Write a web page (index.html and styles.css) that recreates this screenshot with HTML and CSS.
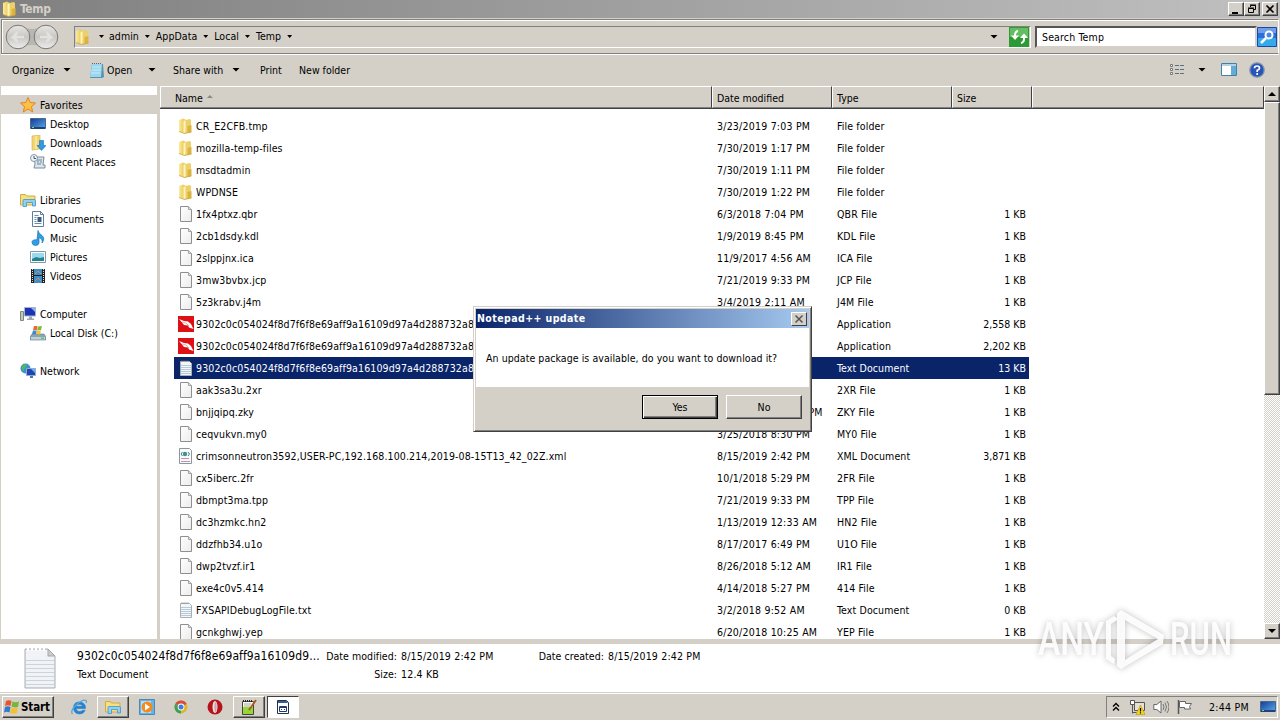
FILE: index.html
```html
<!DOCTYPE html>
<html>
<head>
<meta charset="utf-8">
<title>Temp</title>
<link rel="stylesheet" href="styles.css">
</head>
<body>
<!-- shared icons -->
<svg class="defs">
  <defs>
    <linearGradient id="gPage" x1="0" y1="0" x2="1" y2="1"><stop offset="0" stop-color="#fff"/><stop offset="1" stop-color="#ececec"/></linearGradient>
    <linearGradient id="gFold" x1="0" y1="0" x2="1" y2="0"><stop offset="0" stop-color="#fbeb9d"/><stop offset="1" stop-color="#e4bd3c"/></linearGradient>
    <linearGradient id="gBlue" x1="0" y1="0" x2="1" y2="1"><stop offset="0" stop-color="#153a92"/><stop offset="1" stop-color="#57a9ee"/></linearGradient>
    <linearGradient id="gNav" x1="0" y1="0" x2="0" y2="1"><stop offset="0" stop-color="#e9e7e4"/><stop offset=".5" stop-color="#c9c7c4"/><stop offset="1" stop-color="#eeedeb"/></linearGradient>
  </defs>
  <symbol id="folder" viewBox="0 0 16 16">
    <path d="M1 2l4-1.500 3 1.500v12l-1.500 1.500L1 13.500z" fill="url(#gFold)"/>
    <path d="M6 2.500l5.500-1.500 1.500 1v12L6 15.500z" fill="#ecd06a"/>
    <path d="M5.500 3l2-.8v12l-2 1z" fill="#fff4bd"/>
    <path d="M9.500 8l4-1v7l-4 1z" fill="#dcb340"/>
    <path d="M1 13.500l5.500 2 7-1.500" fill="none" stroke="#c79d31" stroke-width=".7"/>
  </symbol>
  <symbol id="page" viewBox="0 0 16 16">
    <path d="M2.500.5h8l3 3v12h-11z" fill="url(#gPage)" stroke="#8f8f8f"/>
    <path d="M10.500.5v3h3" fill="#ddd" stroke="#a5a5a5"/>
  </symbol>
  <symbol id="text" viewBox="0 0 16 16">
    <path d="M2.500 1.500h9l2 2v12h-11z" fill="#f4f6f8" stroke="#a8b0b6"/>
    <path d="M3.500 1h8" stroke="#777" stroke-dasharray="1 1"/>
    <path d="M3 5.500h10M3 7.500h10M3 9.500h10M3 11.500h10M3 13.500h10" stroke="#b3cadc"/>
  </symbol>
  <symbol id="xml" viewBox="0 0 16 16">
    <path d="M1.500.5h10l2 2v13h-12z" fill="#fafafa" stroke="#8d959d"/>
    <circle cx="7" cy="6" r="2.200" fill="#35997f"/><path d="M4.500 4L3 6l1.500 2M10 4l1.500 2L10 8" fill="none" stroke="#4b6ea8"/>
    <path d="M3 10.500h8M3 13.500h9" stroke="#c491b5"/>
  </symbol>
  <symbol id="app" viewBox="0 0 16 16">
    <path d="M0 0h16v16H0z" fill="#dc1015"/>
    <path d="M1 3l5 2 4 .5 3 2.500 2.500 5-4.500-1.500-1-2-4-.5-2-2.500z" fill="#fff"/><path d="M4 6l4 1 3 3" fill="none" stroke="#eaa"/>
  </symbol>
  <symbol id="monitor" viewBox="0 0 16 16">
    <path d="M.5 2.500h15v10H.5z" fill="url(#gBlue)" stroke="#49688f"/>
    <path d="M1 11h14v2H1z" fill="#1e4374"/><path d="M2 11.500h2" stroke="#7dd07d"/>
  </symbol>
  <symbol id="library" viewBox="0 0 16 16">
    <path d="M.5 2.500h5l1 1.500h8.500v9H.5z" fill="#f6df7e" stroke="#d2ab43"/>
    <path d="M3 13.500V8.500q0-1 1-1h10q1.500 0 1.500 1v5.500h-3v-3.500h-6v4H3z" fill="#8fd0f4" stroke="#3f95c8" stroke-width=".8"/>
  </symbol>
  <symbol id="down" viewBox="0 0 16 16">
    <path d="M2 1l8-1v14l-8 1z" fill="#f0d774" stroke="#d2ae43" stroke-width=".6"/><path d="M6 1v13" stroke="#fff5bf"/>
    <path d="M9.500 5.500h4v5H16l-4.500 5-4.500-5h2.500z" fill="#3198e2" stroke="#1b6fb5" stroke-width=".6"/>
  </symbol>
</svg>

<!-- title bar -->
<div class="titlebar">
  <svg class="i16"><use href="#folder"/></svg>
  <span class="title">Temp</span>
  <div class="wbtns">
    <span class="wbtn"><svg viewBox="0 0 10 10"><path d="M1 8h6v2H1z"/></svg></span>
    <span class="wbtn"><svg viewBox="0 0 10 10"><path d="M3.500 3V1.500h5v4H7M3 1h6" fill="none" stroke="#000"/><path d="M1.500 4.500h5v4h-5zM1 4h6" fill="none" stroke="#000"/></svg></span>
    <span class="wbtn last"><svg viewBox="0 0 10 10"><path d="M1.500 1.500l7 7M8.500 1.500l-7 7" stroke="#000" stroke-width="1.600"/></svg></span>
  </div>
</div>

<!-- address row -->
<div class="nav">
  <svg class="arrows" viewBox="0 0 56 28">
    <path d="M12 3q16 6 33 0v22q-17-6-33 0z" fill="#b9b6b1"/>
    <circle cx="14" cy="14" r="11.800" fill="url(#gNav)" stroke="#777"/><circle cx="42" cy="14" r="11.800" fill="url(#gNav)" stroke="#777"/>
    <path d="M20 14H9l4.500-4.500M9 14l4.500 4.500M36 14h11l-4.500-4.500M47 14l-4.500 4.500" fill="none" stroke="#e4e2df" stroke-width="2.500"/>
  </svg>
  <div class="address">
    <svg class="i16"><use href="#folder"/></svg>
    <i class="tri first"></i><span>admin</span><i class="tri"></i><span>AppData</span><i class="tri"></i><span>Local</span><i class="tri"></i><span>Temp</span><i class="tri"></i>
    <i class="tri big end"></i>
    <svg class="go" viewBox="0 0 20 20"><path d="M0 0h20v20H0z" fill="#2d9b35"/><path d="M1 1h18v9H1z" fill="#63bd62"/><path d="M9 4Q5.500 4.500 6 10M12 16q3.500-.5 3-6" fill="none" stroke="#fff" stroke-width="2"/><path d="M2 8.500h8L6 13zM11 11h8l-4-4.500z" fill="#fff"/></svg>
  </div>
  <div class="search">Search Temp</div>
  <svg class="find" viewBox="0 0 20 20"><path d="M.5.5h19v19H.5z" fill="#2c6ddd" stroke="#194ba4"/><path d="M1 11h18v8H1z" fill="#35a9ee"/><path d="M1 1h18v5H1z" fill="#6f9de9"/><circle cx="12" cy="8" r="3.500" fill="#4d86e0" stroke="#fff" stroke-width="2"/><path d="M9 11l-5 5" stroke="#fff" stroke-width="2.500"/></svg>
</div>

<!-- command bar -->
<div class="commands">
  <span class="c1">Organize</span><i class="tri big"></i>
  <svg class="i16 np" viewBox="0 0 16 16"><path d="M3 2h11l1 13-2 1H1z" fill="#5b93ae"/><path d="M3 2h10l-1 13H1z" fill="#9ad7ef"/><path d="M3 1.500h10" stroke="#567" stroke-dasharray="1 1"/><path d="M3 5h9M3 8h9M2 11h9" stroke="#c8edf9"/></svg>
  <span class="c2">Open</span><i class="tri big"></i>
  <span class="c3">Share with</span><i class="tri big"></i>
  <span class="c4">Print</span>
  <span class="c5">New folder</span>
  <div class="views">
    <svg class="i16" viewBox="0 0 16 16"><path d="M1.500 2.500h2v2h-2zM1.500 6.500h2v2h-2zM1.500 10.500h2v2h-2z" fill="#fff" stroke="#777"/><path d="M6 3.500h4M11 3.500h4M6 7.500h4M11 7.500h4M6 11.500h4M11 11.500h4" stroke="#5d7183"/></svg>
    <i class="tri big"></i>
    <svg class="i16 pane" viewBox="0 0 16 16"><path d="M.5 1.500h15v12H.5z" fill="#fff" stroke="#3d82ad"/><path d="M1 2h14v2H1z" fill="#b4d3e5"/><path d="M10 4h5v9h-5z" fill="#62acd5"/></svg>
    <svg class="i16" viewBox="0 0 16 16"><circle cx="8" cy="8" r="7.200" fill="#2855b8" stroke="#8493ac" stroke-width="1.300"/><path d="M5.500 6.200Q5.500 4 8 4t2.500 2.200Q10.500 7.500 8.200 8.300V10M8.200 11v2" fill="none" stroke="#fff" stroke-width="1.700"/></svg>
  </div>
</div>

<div class="main">
  <!-- navigation pane -->
  <div class="side">
    <div class="s top on"><svg class="i16" viewBox="0 0 16 16"><path d="M8 .5l2.200 5 5.300.5-4 3.500 1.200 5.500L8 12l-4.700 3 1.200-5.500-4-3.500 5.300-.5z" fill="#fcc043" stroke="#e28320"/></svg>Favorites</div>
    <div class="s"><svg class="i16"><use href="#monitor"/></svg>Desktop</div>
    <div class="s"><svg class="i16"><use href="#down"/></svg>Downloads</div>
    <div class="s"><svg class="i16" viewBox="0 0 16 16"><path d="M4 3h10l-1 8h2v3H4l1-4z" fill="#dae5ee" stroke="#7b8d9b"/><path d="M7 6h5M7 8h2M10 8h2M7 10h4" stroke="#6e8497"/><circle cx="4" cy="4" r="3.500" fill="#eef3f7" stroke="#8796a3"/><path d="M4 2v2.500h2" fill="none" stroke="#456"/></svg>Recent Places</div>
    <div class="s top gap"><svg class="i16"><use href="#library"/></svg>Libraries</div>
    <div class="s"><svg class="i16" viewBox="0 0 16 16"><path d="M2.500.5h8l3 3v12h-11z" fill="#fff" stroke="#5e7f9b"/><path d="M10.500.5v3h3" fill="none" stroke="#5e7f9b"/><path d="M4.500 4.500h4M4.500 6.500h2M4.500 8.500h2M4.500 10.500h2M4.500 12.500h7" stroke="#668bac"/><path d="M7.500 6h4v5h-4z" fill="#375b82"/></svg>Documents</div>
    <div class="s"><svg class="i16" viewBox="0 0 16 16"><path d="M8 .5q.5 3 4 5 3.500 3 0 7.500 1-4-3-5.500v5.500q-.5 2.500-3.500 2.500T2 12.500t5-2.700z" fill="#2f9fe3" stroke="#1b73b7" stroke-width=".7"/></svg>Music</div>
    <div class="s"><svg class="i16" viewBox="0 0 16 16"><path d="M.5 2.500h15v11H.5z" fill="#fff" stroke="#8199a5"/><path d="M2 4h12v8H2z" fill="#9ad9ee"/><path d="M2 10l4-2 4 1 4-1v4H2z" fill="#248292"/></svg>Pictures</div>
    <div class="s"><svg class="i16" viewBox="0 0 16 16"><path d="M1 1h14v14H1z" fill="#222"/><path d="M4 1h8v6H4zM4 8h8v7H4z" fill="#3c8fca"/><path d="M2.500 1v14M13.500 1v14" stroke="#ddd" stroke-dasharray="1 1"/><path d="M5 6l3-3 3 3M5 13l3-3 3 3" stroke="#d08c5a" fill="none"/></svg>Videos</div>
    <div class="s top gap"><svg class="i16" viewBox="0 0 16 16"><path d="M.5 5.500h3v9h-3z" fill="#bfc9bd" stroke="#7a8a7a"/><path d="M4.500 1.500h11v8.500h-11z" fill="#1b34b5" stroke="#aab4c5"/><path d="M11 2h4v4z" fill="#88b0f0"/><path d="M9 10.500h3v2h2V14H7v-1.500h2z" fill="#9ba7b5"/></svg>Computer</div>
    <div class="s"><svg class="i16" viewBox="0 0 16 16"><path d="M2 9h12l2 3v3H0v-3z" fill="#8aa5b2" stroke="#5f7986" stroke-width=".6"/><path d="M1 12h14v2.500H1z" fill="#bed0d8"/><path d="M11 13.200h3" stroke="#42b542"/><path d="M4 1l3.500 0-.7 4H3z" fill="#ec6a2f"/><path d="M8 1.500l4-.5-1 4-4 .5z" fill="#80b938"/><path d="M3 5.500h3.800L6 9H2z" fill="#3b87d4"/><path d="M7 6l4-.5-1 4-4-.5z" fill="#f8c230"/></svg>Local Disk (C:)</div>
    <div class="s top gap"><svg class="i16" viewBox="0 0 16 16"><circle cx="5.500" cy="5.500" r="5" fill="#3a92cf"/><path d="M2 3q3-3 5-1l-2 3-3 4zM6 7l3-2v4z" fill="#56b85b"/><path d="M6.500 5.500h9v7h-9z" fill="#1c45b9" stroke="#9aaac2"/><path d="M11 6h4v4z" fill="#6eadf0"/><path d="M10 13h3v2h-3z" fill="#4e74b4"/></svg>Network</div>
  </div>

  <!-- file list -->
  <div class="list">
    <div class="head"><span class="h name">Name <i class="sort"></i></span><span class="h date">Date modified</span><span class="h type">Type</span><span class="h size">Size</span><span class="h rest"></span></div>
    <div class="rows">
      <div class="row"><svg class="i16"><use href="#folder"/></svg><span class="n">CR_E2CFB.tmp</span><span class="d">3/23/2019 7:03 PM</span><span class="t">File folder</span><span class="z"></span></div>
      <div class="row"><svg class="i16"><use href="#folder"/></svg><span class="n">mozilla-temp-files</span><span class="d">7/30/2019 1:17 PM</span><span class="t">File folder</span><span class="z"></span></div>
      <div class="row"><svg class="i16"><use href="#folder"/></svg><span class="n">msdtadmin</span><span class="d">7/30/2019 1:11 PM</span><span class="t">File folder</span><span class="z"></span></div>
      <div class="row"><svg class="i16"><use href="#folder"/></svg><span class="n">WPDNSE</span><span class="d">7/30/2019 1:22 PM</span><span class="t">File folder</span><span class="z"></span></div>
      <div class="row"><svg class="i16"><use href="#page"/></svg><span class="n">1fx4ptxz.qbr</span><span class="d">6/3/2018 7:04 PM</span><span class="t">QBR File</span><span class="z">1 KB</span></div>
      <div class="row"><svg class="i16"><use href="#page"/></svg><span class="n">2cb1dsdy.kdl</span><span class="d">1/9/2019 8:45 PM</span><span class="t">KDL File</span><span class="z">1 KB</span></div>
      <div class="row"><svg class="i16"><use href="#page"/></svg><span class="n">2slppjnx.ica</span><span class="d">11/9/2017 4:56 AM</span><span class="t">ICA File</span><span class="z">1 KB</span></div>
      <div class="row"><svg class="i16"><use href="#page"/></svg><span class="n">3mw3bvbx.jcp</span><span class="d">7/21/2019 9:33 PM</span><span class="t">JCP File</span><span class="z">1 KB</span></div>
      <div class="row"><svg class="i16"><use href="#page"/></svg><span class="n">5z3krabv.j4m</span><span class="d">3/4/2019 2:11 AM</span><span class="t">J4M File</span><span class="z">1 KB</span></div>
      <div class="row"><svg class="i16"><use href="#app"/></svg><span class="n">9302c0c054024f8d7f6f8e69aff9a16109d97a4d288732a8</span><span class="d"></span><span class="t">Application</span><span class="z">2,558 KB</span></div>
      <div class="row"><svg class="i16"><use href="#app"/></svg><span class="n">9302c0c054024f8d7f6f8e69aff9a16109d97a4d288732a8</span><span class="d"></span><span class="t">Application</span><span class="z">2,202 KB</span></div>
      <div class="row sel"><svg class="i16"><use href="#text"/></svg><span class="n">9302c0c054024f8d7f6f8e69aff9a16109d97a4d288732a8</span><span class="d"></span><span class="t">Text Document</span><span class="z">13 KB</span></div>
      <div class="row"><svg class="i16"><use href="#page"/></svg><span class="n">aak3sa3u.2xr</span><span class="d"></span><span class="t">2XR File</span><span class="z">1 KB</span></div>
      <div class="row"><svg class="i16"><use href="#page"/></svg><span class="n">bnjjqipq.zky</span><span class="d">10/11/2018 12:30 PM</span><span class="t">ZKY File</span><span class="z">1 KB</span></div>
      <div class="row"><svg class="i16"><use href="#page"/></svg><span class="n">ceqvukvn.my0</span><span class="d">3/25/2018 8:30 PM</span><span class="t">MY0 File</span><span class="z">1 KB</span></div>
      <div class="row"><svg class="i16"><use href="#xml"/></svg><span class="n">crimsonneutron3592,USER-PC,192.168.100.214,2019-08-15T13_42_02Z.xml</span><span class="d">8/15/2019 2:42 PM</span><span class="t">XML Document</span><span class="z">3,871 KB</span></div>
      <div class="row"><svg class="i16"><use href="#page"/></svg><span class="n">cx5iberc.2fr</span><span class="d">10/1/2018 5:29 PM</span><span class="t">2FR File</span><span class="z">1 KB</span></div>
      <div class="row"><svg class="i16"><use href="#page"/></svg><span class="n">dbmpt3ma.tpp</span><span class="d">7/21/2019 9:33 PM</span><span class="t">TPP File</span><span class="z">1 KB</span></div>
      <div class="row"><svg class="i16"><use href="#page"/></svg><span class="n">dc3hzmkc.hn2</span><span class="d">1/13/2019 12:33 AM</span><span class="t">HN2 File</span><span class="z">1 KB</span></div>
      <div class="row"><svg class="i16"><use href="#page"/></svg><span class="n">ddzfhb34.u1o</span><span class="d">8/17/2017 6:49 PM</span><span class="t">U1O File</span><span class="z">1 KB</span></div>
      <div class="row"><svg class="i16"><use href="#page"/></svg><span class="n">dwp2tvzf.ir1</span><span class="d">8/26/2018 5:12 AM</span><span class="t">IR1 File</span><span class="z">1 KB</span></div>
      <div class="row"><svg class="i16"><use href="#page"/></svg><span class="n">exe4c0v5.414</span><span class="d">4/14/2018 5:27 PM</span><span class="t">414 File</span><span class="z">1 KB</span></div>
      <div class="row"><svg class="i16"><use href="#text"/></svg><span class="n">FXSAPIDebugLogFile.txt</span><span class="d">3/2/2018 9:52 AM</span><span class="t">Text Document</span><span class="z">0 KB</span></div>
      <div class="row"><svg class="i16"><use href="#page"/></svg><span class="n">gcnkghwj.yep</span><span class="d">6/20/2018 10:25 AM</span><span class="t">YEP File</span><span class="z">1 KB</span></div>
    </div>
  </div>
  <div class="scroll">
    <span class="sb"><i class="tri big up"></i></span>
    <span class="thumb"></span>
    <span class="track"></span>
    <span class="sb"><i class="tri big"></i></span>
  </div>
</div>

<!-- details pane -->
<div class="details">
  <svg class="bigdoc" viewBox="0 0 32 42">
    <path d="M1 2h23l7 7v32H1z" fill="#e6eaee" stroke="#a9b0b5"/>
    <path d="M2 3h21v7h7v30H2z" fill="#f1f3f6"/>
    <path d="M2 13.500h28M2 17.500h28M2 21.500h28M2 25.500h28M2 29.500h28M2 33.500h28M2 37.500h28" stroke="#c9d4df"/>
    <path d="M24 2v7h7z" fill="#ccc" stroke="#999" stroke-width=".7"/><path d="M3 2h19" stroke="#fff" stroke-width="4" stroke-dasharray="2 2"/>
  </svg>
  <div class="dcol d1"><span class="dname">9302c0c054024f8d7f6f8e69aff9a16109d9...</span><span>Text Document</span></div>
  <div class="dcol d2"><span>Date modified:</span><span>Size:</span></div>
  <div class="dcol d3"><span>8/15/2019 2:42 PM</span><span>12.4 KB</span></div>
  <div class="dcol d4"><span>Date created:</span></div>
  <div class="dcol d5"><span>8/15/2019 2:42 PM</span></div>
</div>

<!-- taskbar -->
<div class="taskbar">
  <div class="start"><svg class="i16" viewBox="0 0 16 16"><path d="M2 2q3-1.500 5.500 0L6.500 7Q4 5.500 1 7z" fill="#e8552a"/><path d="M8.500 2.500q3 1.500 6.500 0L14 8q-3 1-6.500-.5z" fill="#76b73a"/><path d="M1 8q3-1.500 5.500 0l-1 5.500q-2.500-1.500-5.500 0z" fill="#3379cc"/><path d="M7.300 8.500q3 1.500 6.500.5l-1 5q-3 1.500-6.500 0z" fill="#f5bf2d"/></svg><b>Start</b></div>
  <div class="tb"><svg class="i16" viewBox="0 0 16 16"><path d="M14.500 9.500H5q.5 3 3.500 3 2 0 3-1.200h2.700q-1.500 3.700-5.700 3.700-6-.3-6-6.300Q2.500 3 8.500 3q6.300.5 6 6.500zM5 7.200h6.500Q11 5.200 8.300 5.200T5 7.200z" fill="#2482cf" stroke="#2482cf" stroke-width=".6"/><path d="M1.500 15Q-1 12 5 6q7-6 10-4.500 1 .5 0 2.500" fill="none" stroke="#52a9dc" stroke-width="1.300"/></svg></div>
  <div class="tb up"><svg class="i16"><use href="#library"/></svg></div>
  <div class="tb"><svg class="i16" viewBox="0 0 16 16"><path d="M.5.5h15v15H.5z" fill="#65b4e5" stroke="#4b87b8"/><path d="M2 2h10v12H2z" fill="#b7def5"/><circle cx="8" cy="8" r="5.500" fill="#f48a1c"/><path d="M6 4.500l5 3.500-5 3.500z" fill="#fff"/></svg></div>
  <div class="tb"><svg class="i16" viewBox="0 0 16 16"><circle cx="8" cy="8" r="6.500" fill="#ddb62c"/><path d="M8 8L2.400 4.700a6.500 6.500 0 0 1 11.300.1z" fill="#db4b3c"/><path d="M8 8v6.500A6.500 6.500 0 0 1 2.400 4.700z" fill="#3f9f56"/><circle cx="8" cy="8" r="3.400" fill="#fff"/><circle cx="8" cy="8" r="2.500" fill="#3f7edb"/></svg></div>
  <div class="tb"><svg class="i16" viewBox="0 0 16 16"><circle cx="8" cy="8" r="7.500" fill="#b5141d"/><ellipse cx="8" cy="8" rx="2.500" ry="6" fill="#f3e6e4"/><ellipse cx="8.500" cy="8" rx="1.200" ry="5" fill="#c9a9a7"/></svg></div>
  <div class="tb up"><svg class="i16" viewBox="0 0 16 16"><path d="M1.500 2.500h11v13h-11z" fill="#f7f7f0" stroke="#444"/><path d="M2 8h10v7H2z" fill="#98d636"/><path d="M2 2h10" stroke="#222" stroke-width="2" stroke-dasharray="1 1"/><path d="M3 5h7M3 7h6" stroke="#aaa"/><path d="M15 1L8 11" stroke="#a55e20" stroke-width="2"/></svg></div>
  <div class="tb pressed"><svg class="i16" viewBox="0 0 16 16"><path d="M2.500 1.500h9l2 2v11h-11z" fill="#fff" stroke="#234"/><path d="M3 2h8.500l1.500 2H3z" fill="#3a5997"/><path d="M4.500 7.500h7v5h-7zM4.500 8.500h7" fill="none" stroke="#223a73"/><path d="M6 10.500h1M9 10.500h1" stroke="#223a73"/></svg></div>
  <div class="tray">
    <svg class="chev" viewBox="0 0 8 10"><path d="M1 4.500L4 1.500l3 3M1 8.500l3-3 3 3" fill="none" stroke="#000" stroke-width="1.400"/></svg>
    <svg class="i16" viewBox="0 0 16 16"><path d="M5.500 3.500h10v8h-10z" fill="#e4e1da" stroke="#555"/><path d="M1.500 1.500h4v4h-4zM3.500 5.500v9M3.500 13.500h4" fill="#fff" stroke="#555"/><path d="M11.500 6l4.500 9.500H7z" fill="#fbd71c" stroke="#b29200" stroke-width=".6"/><path d="M11.500 9v3.500M11.500 13.300v1.200" stroke="#000" stroke-width="1.200"/></svg>
    <svg class="i16" viewBox="0 0 16 16"><path d="M.8 5.500h3L8 2v12l-4.200-3.500h-3z" fill="#fff" stroke="#666"/><path d="M10 5q2 3 0 6M12 3.500q3 4.500 0 9M14 2q4 6 0 12" fill="none" stroke="#777"/></svg>
    <svg class="i16" viewBox="0 0 16 16"><path d="M1.500 1v14" stroke="#555" stroke-width="1.500"/><path d="M2.500 2.500h6v2h6l-2 3 1 2.500h-6V8.500h-5z" fill="#fff" stroke="#666"/></svg>
    <span class="clock">2:44 PM</span>
    <svg class="i16"><use href="#monitor"/></svg>
  </div>
</div>

<!-- message box -->
<div class="dialog">
  <div class="dtitle"><b>Notepad++ update</b><span class="x"><svg viewBox="0 0 10 10"><path d="M1.500 1.500l7 7M8.500 1.500l-7 7" stroke="#555" stroke-width="1.500"/></svg></span></div>
  <div class="dbody">An update package is available, do you want to download it?</div>
  <div class="dfoot"><button class="btn def">Yes</button><button class="btn">No</button></div>
</div>

<!-- watermark -->
<svg class="mark" viewBox="0 0 210 72">
  <g fill="#fff" fill-opacity=".9">
    <text x="8" y="51" textLength="66" lengthAdjust="spacingAndGlyphs">ANY</text>
    <text x="140" y="51" textLength="62" lengthAdjust="spacingAndGlyphs">RUN</text>
    <path fill-rule="evenodd" d="M91 6l43 25-1 9-42 25-4-3V16l-6 4v32l4 3-1 5-8-5V17l8-5 3 2V9zM95 16v40l33-21z"/>
  </g>
</svg>
</body>
</html>
```
FILE: styles.css
```css
* {
box-sizing: border-box;
}
body {
margin: 0;
width: 1280px;
height: 720px;
overflow: hidden;
background: #d4d0c8;
font-family: "DejaVu Sans Condensed", "DejaVu Sans", sans-serif;
font-stretch: condensed;
font-size: 10.5px;
color: #000;
display: flex;
flex-direction: column;
cursor: default;
white-space: nowrap;
}
.defs {
position: absolute;
width: 0;
height: 0;
}
.i16 {
width: 16px;
height: 16px;
flex: none;
}
.tri {
width: 5px;
height: 3px;
background: #000;
clip-path: polygon(0 0, 100% 0, 50% 100%);
flex: none;
}
.tri.big {
width: 8px;
height: 4px;
}
.tri.up {
transform: scaleY(-1);
}

/* title bar */
.titlebar {
height: 18px;
flex: none;
display: flex;
align-items: center;
padding: 0 2px;
background: linear-gradient(to right, #808080, #c0c0c0);
}
.title {
color: #d4d0c8;
font-size: 12px;
font-weight: bold;
letter-spacing: -.4px;
margin-left: 2px;
}
.wbtns {
display: flex;
margin-left: auto;
}
.wbtn {
width: 16px;
height: 14px;
background: #d4d0c8;
border: 1px solid;
border-color: #fff #404040 #404040 #fff;
box-shadow: inset -1px -1px #808080;
display: flex;
align-items: center;
justify-content: center;
}
.wbtn.last {
margin-left: 2px;
}
.wbtn svg {
width: 10px;
height: 10px;
}

/* address row */
.nav {
height: 35px;
margin: 1px 1px 0;
flex: none;
display: flex;
align-items: center;
border: 1px solid;
border-color: #808080 #fff #808080 #808080;
box-shadow: inset 1px 1px #fff, 0 1px #fff;
padding: 0 0 0 2px;
}
.arrows {
width: 56px;
height: 28px;
}
.address {
width: 957px;
height: 22px;
margin-left: 14px;
display: flex;
align-items: center;
border: 1px solid;
border-color: #808080 #fff #fff #808080;
letter-spacing: .05px;
}
.address span {
padding-bottom: 1px;
}
.address .tri {
margin: 0 6px;
}
.address .first {
margin: 0 5px 0 8px;
}
.address .end {
margin: 0 11px 0 auto;
}
.address .go {
width: 20px;
height: 20px;
margin-right: 1px;
}
.search {
width: 222px;
height: 22px;
margin-left: 4px;
background: #fff;
border: 2px solid;
border-color: #555 #d4d0c8 #d4d0c8 #555;
padding: 2px 0 0 5px;
line-height: 14px;
letter-spacing: .15px;
}
.find {
width: 20px;
height: 20px;
}

/* command bar */
.commands {
height: 32px;
flex: none;
display: flex;
align-items: center;
padding: 0 15px 1px 12px;
}
.c1 {
width: 51px;
}
.c2 {
width: 41px;
margin-left: 2px;
}
.c3 {
width: 59px;
margin-left: 17px;
}
.c4 {
width: 39px;
margin-left: 20px;
}
.np {
margin-left: 18px;
}
.views {
margin-left: auto;
display: flex;
align-items: center;
}
.views .tri {
margin: 0 15px 0 13px;
}
.pane {
margin-right: 12px;
}

.main {
height: 553px;
flex: none;
display: flex;
}

/* navigation pane */
.side {
width: 160px;
background: #fff;
border-right: 3px solid #d4d0c8;
border-left: 1px solid #d4d0c8;
padding-top: 9px;
}
.s {
height: 19px;
display: flex;
align-items: center;
gap: 4px;
padding-left: 29px;
}
.s.top {
padding-left: 19px;
}
.s.on {
background: #d4d0c8;
}
.s.gap {
margin-top: 19px;
}

/* file list */
.list {
width: 1104px;
background: #fff;
overflow: hidden;
}
.head {
height: 23px;
display: flex;
border-bottom: 1px solid #404040;
background: #d4d0c8;
}
.h {
width: 120px;
border: 1px solid;
border-color: #fff #404040 #808080 #fff;
line-height: 22px;
padding-left: 4px;
}
.h.name {
width: 552px;
padding-left: 14px;
}
.h.size {
width: 80px;
}
.h.rest {
width: 232px;
}
.sort {
display: inline-block;
width: 6px;
height: 3px;
margin: 0 0 4px 1px;
background: #8c8880;
clip-path: polygon(50% 0, 100% 100%, 0 100%);
}
.rows {
padding: 6px 0 0 14px;
}
.row {
width: 855px;
height: 22px;
display: flex;
align-items: center;
padding: 0 3px 0 4px;
}
.row .i16 {
margin-bottom: 1px;
}
.n {
width: 521px;
margin-left: 2px;
padding-right: 10px;
letter-spacing: .12px;
}
.d {
width: 120px;
letter-spacing: .22px;
}
.t {
width: 112px;
letter-spacing: .12px;
}
.z {
margin-left: auto;
}
.sel {
background: #0a246a;
color: #fff;
}

/* scroll bar */
.scroll {
width: 16px;
display: flex;
flex-direction: column;
}
.sb, .thumb {
border: 1px solid;
border-color: #fff #404040 #404040 #fff;
box-shadow: inset -1px -1px #808080;
background: #d4d0c8;
}
.sb {
height: 16px;
flex: none;
display: flex;
align-items: center;
justify-content: center;
}
.thumb {
height: 293px;
flex: none;
}
.track {
flex: 1;
background: repeating-conic-gradient(#fff 0 25%, #d4d0c8 0 50%) 0 0 / 2px 2px;
}

/* details pane */
.details {
height: 53px;
flex: none;
display: flex;
background: #fff;
border-top: 5px solid #d4d0c8;
padding-left: 24px;
}
.bigdoc {
width: 32px;
height: 42px;
margin-top: 3px;
}
.dcol {
display: flex;
flex-direction: column;
padding-top: 3px;
line-height: 18px;
letter-spacing: .18px;
}
.d1 {
width: 247px;
margin-left: 21px;
}
.dname {
font-size: 12px;
letter-spacing: .08px;
}
.d2 {
width: 73px;
text-align: right;
}
.d3 {
margin-left: 4px;
width: 130px;
}
.d4 {
width: 73px;
text-align: right;
}
.d5 {
margin-left: 4px;
}
.d1 span + span, .d2, .d4 {
letter-spacing: .05px;
}

/* taskbar */
.taskbar {
height: 28px;
flex: none;
display: flex;
align-items: center;
border-top: 1px solid #d4d0c8;
box-shadow: inset 0 1px #fff;
padding: 1px 2px 0;
}
.start {
width: 52px;
height: 22px;
display: flex;
align-items: center;
gap: 1px;
font-size: 11.5px;
letter-spacing: -.1px;
padding-left: 1px;
margin-right: 9px;
}
.tb {
width: 32px;
height: 22px;
margin-right: 2px;
display: flex;
align-items: center;
justify-content: center;
}
.start, .tb.up {
border: 1px solid;
border-color: #fff #404040 #404040 #fff;
box-shadow: inset -1px -1px #808080;
}
.tb.pressed {
background: #fff;
border: 1px solid;
border-color: #404040 #fff #fff #404040;
}
.tray {
width: 172px;
height: 22px;
margin-left: auto;
display: flex;
align-items: center;
border: 1px solid;
border-color: #808080 #fff #fff #808080;
padding: 0 1px 0 5px;
}
.tray .i16 {
margin-right: 8px;
}
.chev {
width: 8px;
height: 10px;
margin-right: 9px;
}
.clock {
margin: 0 auto 0 8px;
letter-spacing: .25px;
}
.tray .clock + .i16 {
margin-right: 0;
}

/* message box */
.dialog {
position: absolute;
left: 473px;
top: 306px;
width: 339px;
height: 126px;
background: #d4d0c8;
border: 1px solid;
border-color: #d4d0c8 #404040 #404040 #d4d0c8;
box-shadow: inset 1px 1px #fff, inset -1px -1px #808080;
padding: 2px;
z-index: 5;
}
.dtitle {
height: 19px;
display: flex;
align-items: center;
justify-content: space-between;
padding: 0 2px 0 1px;
background: linear-gradient(to right, #0a246a, #a6caf0);
color: #fff;
letter-spacing: .42px;
}
.dtitle b {
padding-bottom: 1px;
}
.x {
width: 16px;
height: 14px;
background: #d4d0c8;
border: 1px solid;
border-color: #fff #404040 #404040 #fff;
display: flex;
align-items: center;
justify-content: center;
}
.x svg {
width: 10px;
height: 10px;
}
.dbody {
height: 59px;
background: #fff;
padding-left: 10px;
line-height: 60px;
letter-spacing: .06px;
}
.dfoot {
display: flex;
justify-content: flex-end;
gap: 8px;
padding: 8px 7px 0 0;
}
.btn {
width: 76px;
height: 24px;
font: inherit;
background: #d4d0c8;
border: 1px solid;
border-color: #fff #404040 #404040 #fff;
box-shadow: inset -1px -1px #808080;
padding: 0;
}
.btn.def {
border-color: #000;
box-shadow: inset 1px 1px #fff, inset -1px -1px #404040, inset -2px -2px #808080;
}

/* watermark */
.mark {
position: absolute;
left: 1030px;
top: 604px;
width: 210px;
height: 72px;
font: 500 47px Roboto, sans-serif;
filter: drop-shadow(0 0 3px rgba(0, 0, 0, .28));
z-index: 6;
}
```
